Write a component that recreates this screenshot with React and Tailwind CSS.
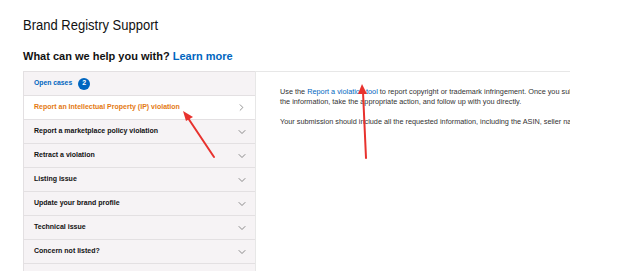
import { ChevronDown, ChevronRight } from "lucide-react";

const items = [
  "Report a marketplace policy violation",
  "Retract a violation",
  "Listing issue",
  "Update your brand profile",
  "Technical issue",
  "Concern not listed?",
  "Contact us",
];

export default function App() {
  return (
    <div className="relative w-[634px] h-[271px] overflow-hidden bg-white text-[#111] font-['Liberation_Sans',Arial,sans-serif]">
      <div className="pl-[23px] pt-[16px]">
        <h1 className="text-[13px] leading-[20px] text-[#111] scale-y-[1.1] origin-left">Brand Registry Support</h1>
        <h2 className="mt-[13px] text-[11px] leading-[14px] font-bold">
          What can we help you with? <span className="text-[#0066c0]">Learn more</span>
        </h2>

        <div className="mt-[8px] flex">
          {/* ===== LEFT MENU ===== */}
          <div className="w-[232px] shrink-0 border-t border-l border-[#e3e0e2] bg-[#f6f3f5]">
            <div className="h-[24px] flex items-center px-[10px] border-b border-[#e3e0e2]">
              <span className="text-[6.8px] font-bold text-[#0066c0]">Open cases</span>
              <span className="ml-[6px] w-[12px] h-[12px] rounded-full bg-[#0066c0] text-white text-[7px] font-bold flex items-center justify-center">
                2
              </span>
            </div>
            <div className="h-[24px] flex items-center justify-between pl-[10px] pr-[8px] bg-white border-b border-[#e3e0e2]">
              <span className="text-[7px] font-bold text-[#e47911]">
                Report an Intellectual Property (IP) violation
              </span>
              <ChevronRight size={11} strokeWidth={1.5} className="text-[#666]" />
            </div>
            {items.map((label) => (
              <div
                key={label}
                className="h-[24px] flex items-center justify-between pl-[10px] pr-[7px] border-b border-[#e3e0e2]"
              >
                <span className="text-[7px] font-bold text-[#111]">{label}</span>
                <ChevronDown size={12} strokeWidth={1.5} className="text-[#666]" />
              </div>
            ))}
          </div>

          {/* ===== DETAIL PANEL ===== */}
          <div className="w-[315px] shrink-0 overflow-hidden border-t border-l border-[#e7e7e7] h-[220px]">
            <div className="pl-[24px] pt-[15px] w-[440px] text-[7.3px] leading-[10px] text-[#333]">
              <p>
                Use the <span className="text-[#0066c0]">Report a violation tool</span> to report copyright
                or trademark infringement. Once you submit a report, we will review
                <br />
                the information, take the appropriate action, and follow up with you directly.
              </p>
              <p className="mt-[10px]">
                Your submission should include all the requested information, including the ASIN, seller name and
              </p>
            </div>
          </div>
        </div>
      </div>

      {/* ===== ANNOTATION ARROWS ===== */}
      <svg className="absolute inset-0 pointer-events-none" width="634" height="271">
        <line x1="214" y1="157" x2="188" y2="118" stroke="#e8322e" strokeWidth="2" strokeLinecap="round" />
        <polygon points="183,111 193,117 186,121" fill="#e8322e" />
        <line x1="366" y1="158" x2="363" y2="92" stroke="#e8322e" strokeWidth="2" strokeLinecap="round" />
        <polygon points="362,84 367,94 358,94" fill="#e8322e" />
      </svg>
    </div>
  );
}
